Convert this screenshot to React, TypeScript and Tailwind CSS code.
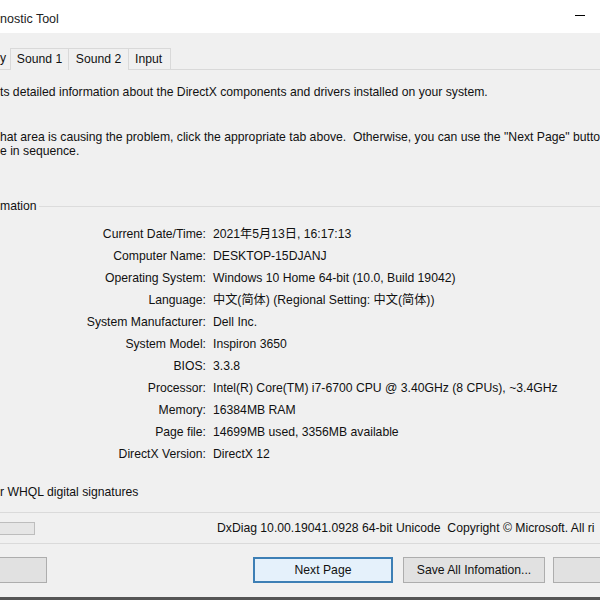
import React from "react";

const font = { fontFamily: '"Liberation Sans", "Noto Sans CJK SC", sans-serif' };

const rows: [string, string][] = [
  ["Current Date/Time:", "2021年5月13日, 16:17:13"],
  ["Computer Name:", "DESKTOP-15DJANJ"],
  ["Operating System:", "Windows 10 Home 64-bit (10.0, Build 19042)"],
  ["Language:", "中文(简体) (Regional Setting: 中文(简体))"],
  ["System Manufacturer:", "Dell Inc."],
  ["System Model:", "Inspiron 3650"],
  ["BIOS:", "3.3.8"],
  ["Processor:", "Intel(R) Core(TM) i7-6700 CPU @ 3.40GHz (8 CPUs), ~3.4GHz"],
  ["Memory:", "16384MB RAM"],
  ["Page file:", "14699MB used, 3356MB available"],
  ["DirectX Version:", "DirectX 12"],
];

function Tab({ label, w }: { label: string; w: string }) {
  return (
    <div className={`flex h-[22px] items-center justify-center border-l border-t border-[#d9d9d9] bg-[#f0f0f0] ${w}`}>
      {label}
    </div>
  );
}

export default function App() {
  return (
    <div className="h-[600px] w-[600px] overflow-hidden bg-[#f0f0f0] text-[12.2px] text-[#111]" style={font}>
      {/* title bar */}
      <div className="flex h-[33px] items-center justify-between bg-white pt-[6px]">
        <span className="text-[12.5px] text-[#222]">nostic Tool</span>
        <span className="mr-[15px] mb-[9px] h-px w-[10px] bg-black" />
      </div>

      {/* tabs */}
      <div className="mt-[15px] flex h-[22px] border-b border-[#d9d9d9]">
        <div className="flex w-[10px] items-center overflow-hidden">y</div>
        <Tab label="Sound 1" w="w-[58px]" />
        <Tab label="Sound 2" w="w-[60px]" />
        <div className="flex h-[22px] w-[43px] items-center border-l border-r border-t border-[#d9d9d9] pl-[6px]">Input</div>
      </div>

      {/* intro text */}
      <div className="mt-[15px] leading-[15px]">ts detailed information about the DirectX components and drivers installed on your system.</div>
      <div className="mt-[30px] leading-[14px]">
        <div className="overflow-hidden whitespace-nowrap">hat area is causing the problem, click the appropriate tab above.&nbsp; Otherwise, you can use the "Next Page" butto</div>
        <div>e in sequence.</div>
      </div>

      {/* group label */}
      <div className="mt-[39px] flex items-center">
        <span>mation</span>
        <div className="ml-[2px] h-px flex-1 bg-[#dcdcdc]" />
      </div>

      {/* info rows */}
      <div className="mt-[8px] flex flex-col">
        {rows.map(([k, v]) => (
          <div key={k} className="flex h-[22px] items-center">
            <div className="w-[206px] shrink-0 text-right">{k}</div>
            <div className="ml-[7px] whitespace-nowrap">{v}</div>
          </div>
        ))}
      </div>

      <div className="mt-[20px] leading-[15px]">r WHQL digital signatures</div>

      <div className="mt-[12px] h-px bg-[#dadada]" />
      <div className="flex h-[30px] items-center overflow-hidden">
        <div className="h-[13px] w-[35px] shrink-0 border border-l-0 border-[#bdbdbd] bg-[#e6e6e6]" />
        <div className="ml-[182px] whitespace-nowrap">DxDiag 10.00.19041.0928 64-bit Unicode&nbsp; Copyright © Microsoft. All ri</div>
      </div>
      <div className="h-px bg-[#dadada]" />

      {/* buttons */}
      <div className="mt-[13px] flex h-[26px]">
        <div className="w-[47px] shrink-0 border border-l-0 border-[#adadad] bg-[#e1e1e1]" />
        <div className="ml-[206px] flex w-[140px] shrink-0 items-center justify-center border-2 border-[#3d7fb5] bg-[#e5f1fb]">Next Page</div>
        <div className="ml-[10px] flex w-[142px] shrink-0 items-center justify-center border border-[#adadad] bg-[#e1e1e1]">Save All Infomation...</div>
        <div className="ml-[8px] flex-1 border border-r-0 border-[#adadad] bg-[#e1e1e1]" />
      </div>
      <div className="mt-[14px] h-[3px] bg-[#555]" />
    </div>
  );
}
